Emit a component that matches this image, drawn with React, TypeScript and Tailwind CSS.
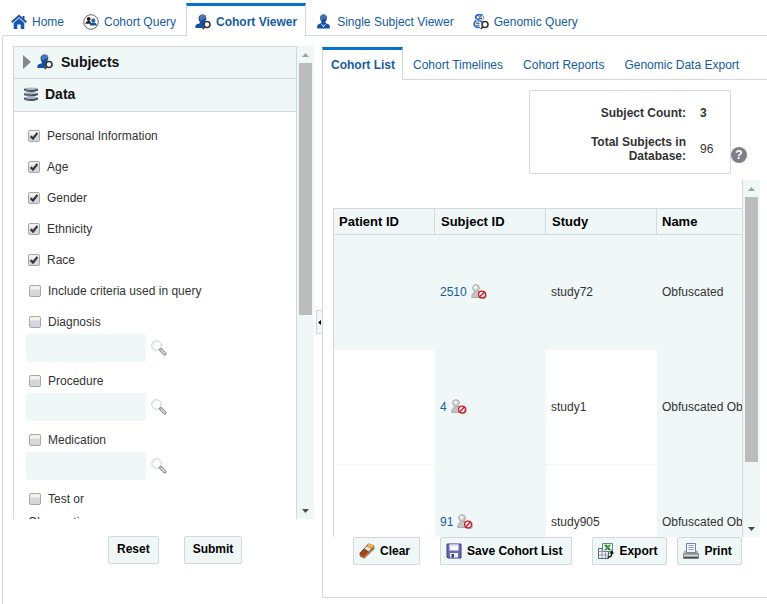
import { useState, type ReactNode } from "react";

function PersonShape() {
  return (
    <>
      <path d="M7.600.6c2.400 0 3.800 1.400 3.700 3.600-.1 1.700-.8 2.700-1.600 3.400-.4.500-.2 1 .2 1.500L8 14H.4v-1.700c0-1.300 1-1.900 2.400-2.300 1.600-.5 2.300-1 2.100-2.100C4 7 3.500 5.600 3.600 4.200 3.700 2 5.300.6 7.600.6z" fill="#1450a3" />
      <path d="M7.600.6c2.300 0 3.600 1.200 3.700 3.100L5.200 6.600C3.700 3.500 4.800.6 7.600.6z" fill="#5674ad" />
    </>
  );
}

function LensShape() {
  return (
    <>
      <path d="M9.800 12.700 7.800 15" stroke="#333" strokeWidth="1.700" />
      <circle cx="12" cy="10.500" r="3" fill="#fff" stroke="#333" strokeWidth="1.600" />
    </>
  );
}

function SubjectSearchIcon() {
  return (
    <svg className="size-4 shrink-0" viewBox="0 0 16 16" aria-hidden="true">
      <PersonShape />
      <LensShape />
    </svg>
  );
}

function HomeIcon() {
  return (
    <svg className="size-4 shrink-0" viewBox="0 0 16 16" aria-hidden="true">
      <path d="M11.500 2h2v3h-2z" fill="#1d4f9c" />
      <path d="M2.700 8.500 8 4l5.300 4.500V15H9.700v-4.500H6.300V15H2.700z" fill="#1557b5" />
      <path d="M.7 8.300 8 1.700l7.300 6.600" fill="none" stroke="#1d4f9c" strokeWidth="1.900" />
      <path d="M2.800 9 8 4.500 13.200 9" fill="none" stroke="#8fb0dd" strokeWidth=".6" />
    </svg>
  );
}

function CohortIcon() {
  return (
    <svg className="size-4 shrink-0" viewBox="0 0 16 16" aria-hidden="true">
      <circle cx="8" cy="8" r="7.300" fill="#fff" stroke="#555" strokeWidth=".9" />
      <circle cx="5.700" cy="5" r="1.900" fill="#222" />
      <path d="M2.300 9.700c0-1.800 1.600-2.300 2.500-2.800h1.600c1 .5 1.900 1 1.900 2.800z" fill="#222" />
      <circle cx="10.300" cy="6.500" r="2" fill="#2460b4" />
      <path d="M6.800 11.500c0-2 1.300-2.500 2.500-3h2c1.300.5 2.500 1 2.500 3z" fill="#1450a3" />
    </svg>
  );
}

function SingleSubjectIcon() {
  return (
    <svg className="size-4 shrink-0" viewBox="0 0 16 16" aria-hidden="true">
      <path d="M7.500.6c2.200 0 3.500 1.500 3.400 3.700-.1 1.600-.7 2.700-1.500 3.400-.1 1.100.6 1.600 1.900 2 1.700.5 2.500 1.200 2.500 2.700v2H1.200v-2c0-1.500.8-2.200 2.500-2.700 1.300-.4 2-.9 1.900-2C4.800 7 4.200 5.900 4.100 4.300 4 2.100 5.300.6 7.500.6z" fill="#1450a3" />
      <path d="M7.500.6c2.100 0 3.300 1.300 3.400 3.300L5.200 6.300C3.200 3.200 4.800.6 7.500.6z" fill="#4a6fb0" />
      <path d="m5.900 10 1.600 2 1.600-2 .7.300-2 2.700h-.6l-2-2.700z" fill="#dce8f7" />
    </svg>
  );
}

function GenomicIcon() {
  return (
    <svg className="size-4 shrink-0" viewBox="0 0 16 16" aria-hidden="true">
      <path d="M9.500 1.300C5.500-.6 1 1.800 3.300 4.500 5.300 6.700 9.300 6.600 9.600 9M3.400 6.500C1 8 .4 10.600 2.300 12.300c1.500 1.300 3.200 1.200 4.500 1" fill="none" stroke="#1e63cf" strokeWidth="1.700" />
      <path d="M9.700 1.600c1.600 1.300 1.500 3.100-.7 4.200-2 1-4.300 1.300-5 3.300" fill="none" stroke="#6fa0e4" strokeWidth="1.100" />
      <path d="M5.300 2.900h3.500M5.700 4.500h3.200M3.200 9.300h3.300M3.400 11.200h3" stroke="#333" strokeWidth=".9" />
      <LensShape />
    </svg>
  );
}

function DatabaseIcon() {
  return (
    <svg className="size-4 shrink-0" viewBox="0 0 16 16" aria-hidden="true">
      {[1.5, 6, 10.5].map((y) => (
        <g key={y}>
          <path d={`M1 ${y + 1}q7 2.4 14 0v1.900q-7 3.400-14 0z`} fill="#444b52" />
          <path d={`M1 ${y + 1}q7-2.200 14 0q-7 2.400-14 0z`} fill="#a3b4c4" />
          <path d={`M1.500 ${y + 2.2}q3 1 6 1v1q-4 0-6-1z`} fill="#737b83" />
        </g>
      ))}
    </svg>
  );
}

function SearchIcon() {
  return (
    <svg className="size-4" viewBox="0 0 16 16" aria-hidden="true">
      <circle cx="5.500" cy="5.500" r="4.800" fill="#fdfdff" stroke="#c9c9d1" strokeWidth="1" />
      <path d="M2 4.500A4 4 0 0 1 6 2" stroke="#f0edcf" strokeWidth="1.200" fill="none" />
      <path d="m9.800 9.800 3.900 3.900" stroke="#85858f" strokeWidth="3.400" strokeLinecap="round" />
      <path d="m10 10 3.600 3.600" stroke="#dfe4e6" strokeWidth="1.600" strokeLinecap="round" />
    </svg>
  );
}

function RestrictedIcon() {
  return (
    <svg className="size-4 shrink-0" viewBox="0 0 16 16" aria-hidden="true">
      <path d="M.7 13.500c0-2.700.6-4.200 2.600-5L4.500 7h3.300l1.200 2v4.500z" fill="#c4c4c4" stroke="#999" strokeWidth=".7" />
      <circle cx="5" cy="4" r="3.300" fill="#d4d4d4" stroke="#a2a2a2" strokeWidth=".9" />
      <circle cx="4.400" cy="3.300" r="1.500" fill="#f8f8f8" />
      <circle cx="12" cy="11.300" r="4" fill="#b4b4b4" />
      <circle cx="11" cy="10.500" r="3.400" fill="#fff" stroke="#d2161d" strokeWidth="1.300" />
      <path d="m8.800 12.700 4.400-4.400" stroke="#d2161d" strokeWidth="1.400" />
    </svg>
  );
}

function EraserIcon() {
  return (
    <svg className="size-4" viewBox="0 0 16 16" aria-hidden="true">
      <path d="M2.500 15.600 6 15.400 16 6V3.500z" fill="#b9b9b9" />
      <path d="M.5 10.200 9.500.6l5.300 2-.3 3.300L5 15l-4-1.800z" fill="#5a2a10" />
      <path d="M7.700 3.300 9.800 1l4.600 1.900-2.300 2.700z" fill="#f0a020" />
      <path d="m9.800 1 4.600 1.900-.8 1-4.600-1.900z" fill="#ffd95a" />
      <path d="m12.100 5.600 2.200-2.500v2.400L12.200 7.700z" fill="#d98510" />
      <path d="m5.300 5.800 2.400-2.500 4.400 2.300-2.500 2.800z" fill="#e6e6e6" />
      <path d="m9.600 8.400 2.500-2.800v2.100l-2.400 2.600z" fill="#9a9a9a" />
      <path d="M1.100 10.200 5.300 5.800l4.300 2.600-4.300 4.500z" fill="#94481c" />
      <path d="m1.100 10.400 4.100 2.500v1.800l-3.900-1.700z" fill="#d9501a" />
      <path d="m5.200 12.900 4.400-4.500.1 1.900-4.500 4.400z" fill="#f06a25" />
    </svg>
  );
}

function FloppyIcon() {
  return (
    <svg className="size-4" viewBox="0 0 16 16" aria-hidden="true">
      <path d="M1 1h14v14H2l-1-1z" fill="#6a6ab4" stroke="#3b3b86" strokeWidth="1" />
      <path d="M3.500 1.500h9v6h-9z" fill="#f6f6fc" />
      <path d="M3.500 1.500h9v1.500h-9z" fill="#dcdcf0" />
      <path d="M4 10h8v4.500H4z" fill="#f2f2f8" />
      <path d="M5.500 11h2.500v3.500H5.500z" fill="#3b3b86" />
    </svg>
  );
}

function ExportIcon() {
  return (
    <svg className="size-4" viewBox="0 0 16 16" aria-hidden="true">
      <path d="M.5 5.500h10v10H.5z" fill="#f4f6fb" stroke="#56627e" />
      <path d="M.5 8.500h10M.5 12h10M4 5.500v10M7.500 8v7" stroke="#7c89a6" strokeWidth=".8" />
      <path d="M4.500.5h10v8h-10z" fill="#f2faf2" stroke="#6f7d99" />
      <path d="M5.800 1.700h3l4.700 5.600h-3z" fill="#21893a" />
      <path d="M13.200 1.700h-2.400L5.800 7.300h2.400z" fill="#3da04f" />
      <path d="M9.500 14c3 .3 4.500-.8 4.300-4.500" fill="none" stroke="#111" strokeWidth="1.500" />
      <path d="m11.300 10.500 2.500-3.300 2.200 3.300z" fill="#111" />
    </svg>
  );
}

function PrinterIcon() {
  return (
    <svg className="size-4" viewBox="0 0 16 16" aria-hidden="true">
      <path d="M3.500.5h9v9h-9z" fill="#f1f4fb" stroke="#7582a3" />
      <path d="M5.500 2.500h5M5.500 4.500h5M5.500 6.500h5" stroke="#8794b8" strokeWidth=".9" />
      <path d="M1.800 8h1.400v2h9.600V8h1.200l1.500 3.500H.5z" fill="#c4c4c4" stroke="#888" strokeWidth=".6" />
      <path d="M.4 11h15.200v4.500H.4z" fill="#a2a2a2" stroke="#666" strokeWidth=".7" />
      <path d="M1 12.300h14" stroke="#ededed" strokeWidth="1" />
      <path d="M1 14.600h14" stroke="#444" strokeWidth="1" />
      <path d="M11.500 9.800h2v1.200h-2z" fill="#35b73c" />
    </svg>
  );
}

function CheckOption({ label, on = false }: { label: ReactNode; on?: boolean }) {
  return (
    <label className="block leading-[23px]">
      <span className={on ? "mr-[7px] inline-grid align-[-2px]" : "mr-[7px] ml-px inline-grid align-[-2px]"}>
        <input
          type="checkbox"
          defaultChecked={on}
          className="peer col-start-1 row-start-1 size-3 appearance-none rounded-[2px] border border-[#a3a8a8] bg-linear-to-b from-[#f3f3e8] from-30% to-[#d6d6df] to-40%"
        />
        <svg className="pointer-events-none invisible col-start-1 row-start-1 size-3 peer-checked:visible" viewBox="0 0 12 12" aria-hidden="true">
          <path d="m2.700 6.200 2.300 2.400 4.400-5.700" fill="none" stroke="#33333b" strokeWidth="2.200" />
        </svg>
      </span>
      {label}
    </label>
  );
}

function LookupOption({ name }: { name: string }) {
  return (
    <div className="mb-2">
      <CheckOption label={name} />
      <div className="flex items-center gap-[5px]">
        <input type="text" aria-label={`${name} value`} className="-ml-0.5 h-7 w-[120px] rounded-[2px] bg-[#eff7f7] px-2 outline-none" />
        <button type="button" aria-label={`Search ${name}`}>
          <SearchIcon />
        </button>
      </div>
    </div>
  );
}

function ScrollRail({ children }: { children: ReactNode }) {
  return (
    <div className="flex w-[18px] shrink-0 flex-col border-l border-[#d6d6df] bg-[#eff7f7]">
      <button type="button" aria-label="Scroll up" className="grid h-[17px] shrink-0 place-items-center">
        <svg className="h-1 w-[7px]" viewBox="0 0 7 4" aria-hidden="true"><path d="M0 4 3.500 0 7 4z" fill="#a0a0a0" /></svg>
      </button>
      <div className="flex-1 px-0.5">{children}</div>
      <button type="button" aria-label="Scroll down" className="grid h-[17px] shrink-0 place-items-center">
        <svg className="h-1 w-[7px]" viewBox="0 0 7 4" aria-hidden="true"><path d="M0 0h7L3.500 4z" fill="#4a4a4f" /></svg>
      </button>
    </div>
  );
}

function ActionButton({ children }: { children: ReactNode }) {
  return (
    <button type="button" className="flex h-7 shrink-0 items-center gap-[5px] rounded-[2px] border border-[#d6d6df] bg-[#eff7f7] pr-[9px] pl-[5px] font-bold text-black">
      {children}
    </button>
  );
}

const sections = [
  { name: "Home", icon: <HomeIcon /> },
  { name: "Cohort Query", icon: <CohortIcon /> },
  { name: "Cohort Viewer", icon: <SubjectSearchIcon /> },
  { name: "Single Subject Viewer", icon: <SingleSubjectIcon /> },
  { name: "Genomic Query", icon: <GenomicIcon /> },
];

const views = ["Cohort List", "Cohort Timelines", "Cohort Reports", "Genomic Data Export"];

const subjects = [
  { id: "2510", study: "study72", name: "Obfuscated" },
  { id: "4", study: "study1", name: "Obfuscated Obfuscated" },
  { id: "91", study: "study905", name: "Obfuscated Obfuscated" },
];

export default function App() {
  const [section, setSection] = useState("Cohort Viewer");
  const [view, setView] = useState("Cohort List");

  return (
    <div className="overflow-hidden bg-white pt-[3px] pl-0.5 font-['Liberation_Sans',Arial,sans-serif] text-xs text-[#333]">
      <nav className="relative -mb-px flex h-[33px] gap-px whitespace-nowrap text-[#145c9e]" aria-label="Sections">
        {sections.map((s) => (
          <button
            key={s.name}
            type="button"
            onClick={() => setSection(s.name)}
            className={
              s.name === section
                ? "flex items-center gap-[5px] border-x border-t-3 border-x-[#d6d6df] border-t-[#0572ce] bg-white px-2 pt-0.5 font-bold"
                : "flex items-center gap-[5px] px-[9px] pt-[5px]"
            }
          >
            {s.icon}
            {s.name}
          </button>
        ))}
      </nav>

      <div className="flex rounded-tl-[3px] border-t border-l border-[#d6d6df] pt-2.5 pl-2.5">
        <aside className="w-[301px] shrink-0 pb-10">
          <div className="flex h-[473px]">
            <div className="min-w-0 flex-1 overflow-hidden border-t border-l border-[#d6d6df]">
              <h2 className="flex h-8 items-center border-b border-[#d6d6df] bg-[#eff7f7] pb-0.5 pl-[9px] text-sm font-bold text-[#111]">
                <svg className="mr-1.5 h-[14px] w-2" viewBox="0 0 8 14" aria-hidden="true"><path d="M0 0 8 7 0 14z" fill="#85858d" /></svg>
                <SubjectSearchIcon />
                <span className="ml-2">Subjects</span>
              </h2>
              <h2 className="flex h-[33px] items-center gap-1.5 border-b border-[#d6d6df] bg-[#eff7f7] pb-0.5 pl-[9px] text-sm font-bold text-[#111]">
                <DatabaseIcon />
                Data
              </h2>
              <div className="pt-[13px] pl-3.5">
                <div className="mb-2 flex flex-col gap-2">
                  <CheckOption label="Personal Information" on />
                  <CheckOption label="Age" on />
                  <CheckOption label="Gender" on />
                  <CheckOption label="Ethnicity" on />
                  <CheckOption label="Race" on />
                  <CheckOption label="Include criteria used in query" />
                </div>
                <LookupOption name="Diagnosis" />
                <LookupOption name="Procedure" />
                <LookupOption name="Medication" />
                <CheckOption label={<>Test or<br />Observation</>} />
              </div>
            </div>
            <ScrollRail>
              <div className="h-[252px] bg-[#bcbcbc]" />
            </ScrollRail>
          </div>
          <div className="mt-[17px] flex gap-[25px] pl-[95px] text-black">
            <button type="button" className="h-7 rounded-[2px] border border-[#d6d6df] bg-[#eff7f7] px-2 pb-0.5 font-bold">Reset</button>
            <button type="button" className="h-7 rounded-[2px] border border-[#d6d6df] bg-[#eff7f7] px-2 pb-0.5 font-bold">Submit</button>
          </div>
        </aside>

        <button type="button" aria-label="Collapse panel" className="mb-1.5 ml-0.5 grid h-6 w-1.5 shrink-0 place-items-center self-center border border-r-0 border-[#d6d6df] bg-[#eff7f7]">
          <svg className="h-[5px] w-[3px]" viewBox="0 0 3 5" aria-hidden="true"><path d="M3 0v5L0 2.500z" fill="#000" /></svg>
        </button>

        <main className="min-w-0 flex-1 pt-px">
          <nav className="relative -mb-px flex h-[33px] whitespace-nowrap text-[#145c9e]" aria-label="Cohort views">
            {views.map((v) => (
              <button
                key={v}
                type="button"
                onClick={() => setView(v)}
                className={
                  v === view
                    ? "border-x border-t-3 border-x-[#d6d6df] border-t-[#0572ce] bg-white pr-[7px] pl-2 font-bold"
                    : "px-2.5 pt-[3px]"
                }
              >
                {v}
              </button>
            ))}
          </nav>

          <div className="rounded-bl-[3px] border-y border-l border-[#d6d6df] pt-2.5 pb-8 pl-2.5">
            <div className="flex items-end justify-end pr-5">
              <dl className="grid h-[84px] w-[202px] grid-cols-[1fr_30px] content-center items-center gap-x-[14px] gap-y-[15px] rounded-[2px] border border-[#d6d6df] pt-[5px] leading-[14px]">
                <dt className="text-right font-bold">Subject Count:</dt>
                <dd className="font-bold">3</dd>
                <dt className="text-right font-bold">Total Subjects in<br />Database:</dt>
                <dd>96</dd>
              </dl>
              <button type="button" aria-label="Help" className="mb-[11px] grid size-4 place-items-center rounded-full bg-[#7f7f87] text-xs font-bold text-white">?</button>
            </div>

            <div className="mt-1.5 mr-[7px] flex h-[357px]">
              <div className="min-w-0 flex-1 overflow-hidden pt-7">
                <table className="w-[520px] table-fixed border-separate border-spacing-0 border-l border-[#d6d6df]">
                  <thead>
                    <tr className="h-[27px] bg-[#eff7f7] text-left text-[13px] text-black">
                      <th className="w-[101px] border-y border-r border-[#d6d6df] px-[5px]">Patient ID</th>
                      <th className="w-[111px] border-y border-r border-[#d6d6df] px-1.5">Subject ID</th>
                      <th className="w-[111px] border-y border-r border-[#d6d6df] px-1.5">Study</th>
                      <th className="border-y border-[#d6d6df] px-[5px]">Name</th>
                    </tr>
                  </thead>
                  <tbody>
                    {subjects.map((s) => (
                      <tr key={s.id} className="group h-[115px] whitespace-nowrap">
                        <td className="border-b border-[#eff7f7] group-first:bg-[#eff7f7]" />
                        <td className="bg-[#eff7f7] px-[5px]">
                          <a href={`#subject-${s.id}`} className="flex items-center gap-1 pb-px text-[#145c9e]">
                            {s.id}
                            <RestrictedIcon />
                          </a>
                        </td>
                        <td className="border-b border-[#eff7f7] px-[5px] group-first:bg-[#eff7f7]">{s.study}</td>
                        <td className="border-b border-[#eff7f7] bg-[#eff7f7] px-[5px]">{s.name}</td>
                      </tr>
                    ))}
                  </tbody>
                </table>
              </div>
              <ScrollRail>
                <div className="h-[265px] bg-[#bcbcbc]" />
              </ScrollRail>
            </div>

            <div className="flex gap-2.5 pl-5">
              <div className="flex flex-wrap gap-5">
                <ActionButton><EraserIcon />Clear</ActionButton>
                <ActionButton><FloppyIcon />Save Cohort List</ActionButton>
                <ActionButton><ExportIcon />Export</ActionButton>
              </div>
              <ActionButton><PrinterIcon />Print</ActionButton>
            </div>
          </div>
        </main>
      </div>
    </div>
  );
}
